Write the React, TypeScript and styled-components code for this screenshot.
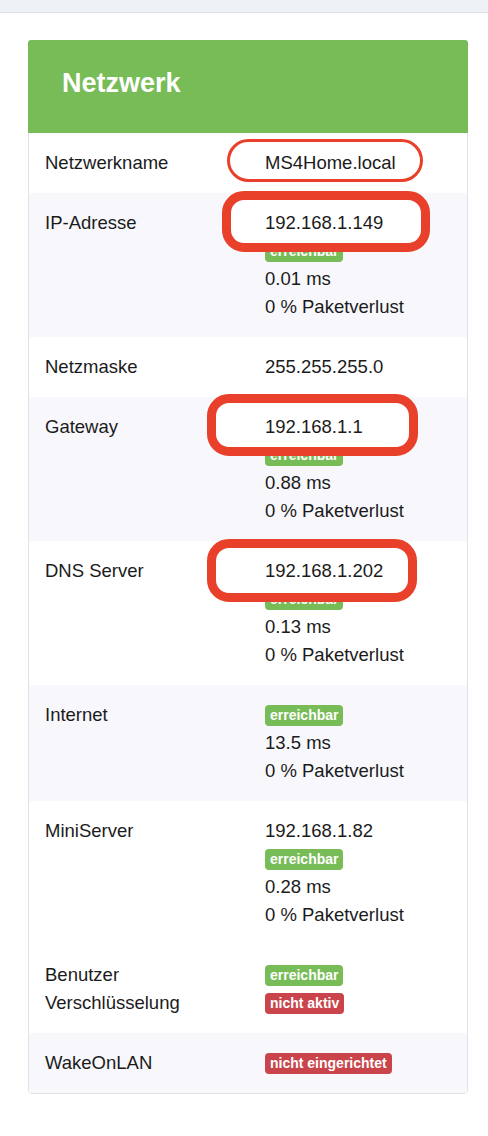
import * as React from "react";
import styled, { createGlobalStyle } from "styled-components";

const GlobalStyle = createGlobalStyle`
  html, body {
    margin: 0;
    padding: 0;
    background: #ffffff;
  }
  body {
    font-family: "Liberation Sans", Arial, sans-serif;
    color: #1b1b1b;
  }
`;

const TopBar = styled.div`
  height: 12px;
  background: #eef1f5;
  border-bottom: 1px solid #dde1e6;
`;

const Page = styled.div`
  padding: 27px 20px 40px 28px;
`;

const Card = styled.div`
  width: 440px;
  box-sizing: border-box;
  border: 1px solid #dfe3e8;
  border-radius: 4px;
  background: #ffffff;
`;

const CardHeader = styled.div`
  height: 93px;
  box-sizing: border-box;
  background: #77bc57;
  border-radius: 3px 3px 0 0;
  margin: -1px -1px 0 -1px;
  padding: 30px 0 0 34px;
`;

const Title = styled.h2`
  margin: 0;
  font-size: 27px;
  font-weight: bold;
  color: #ffffff;
  line-height: 1;
`;

const Row = styled.div<{ $shaded?: boolean }>`
  display: grid;
  grid-template-columns: 220px 1fr;
  padding: 16px 0 16px 16px;
  background: ${(p) => (p.$shaded ? "#f8f8fc" : "#ffffff")};
  font-size: 18.5px;
  line-height: 28px;
`;

const Label = styled.div`
  padding-right: 30px;
`;

const Values = styled.div`
  display: flex;
  flex-direction: column;
  align-items: flex-start;
`;

const Line = styled.div`
  height: 28px;
  display: flex;
  align-items: center;
  white-space: nowrap;
`;

const Badge = styled.span<{ $tone: "ok" | "bad" }>`
  display: inline-block;
  font-size: 14px;
  font-weight: bold;
  line-height: 21px;
  height: 21px;
  padding: 0 5px;
  border-radius: 4px;
  color: #ffffff;
  background: ${(p) => (p.$tone === "ok" ? "#77bc57" : "#c9444b")};
`;

const Marked = styled.span`
  position: relative;
  display: inline-block;
`;

const MarkText = styled.span`
  position: relative;
  z-index: 2;
`;

const MarkBox = styled.span<{
  $left: number;
  $top: number;
  $w: number;
  $h: number;
  $thick: number;
}>`
  position: absolute;
  z-index: 1;
  left: ${(p) => p.$left}px;
  top: ${(p) => p.$top}px;
  width: ${(p) => p.$w}px;
  height: ${(p) => p.$h}px;
  box-sizing: border-box;
  border: ${(p) => p.$thick}px solid #e8402a;
  border-radius: ${(p) => Math.min(p.$h / 2, 22)}px;
  background: #ffffff;
`;

interface Mark {
  left: number;
  top: number;
  w: number;
  h: number;
  thick: number;
}

function Highlighted({ text, mark }: { text: string; mark: Mark }) {
  return (
    <Marked>
      <MarkBox
        $left={mark.left}
        $top={mark.top}
        $w={mark.w}
        $h={mark.h}
        $thick={mark.thick}
      />
      <MarkText>{text}</MarkText>
    </Marked>
  );
}

type Tone = "ok" | "bad";

interface Entry {
  label: string;
  shaded?: boolean;
  value?: string;
  mark?: Mark;
  badges?: { text: string; tone: Tone }[];
  ping?: string;
}

const entries: Entry[] = [
  {
    label: "Netzwerkname",
    value: "MS4Home.local",
    mark: { left: -38, top: -10, w: 196, h: 43, thick: 3 }
  },
  {
    label: "IP-Adresse",
    shaded: true,
    value: "192.168.1.149",
    mark: { left: -43, top: -18, w: 208, h: 61, thick: 9 },
    badges: [{ text: "erreichbar", tone: "ok" }],
    ping: "0.01 ms"
  },
  { label: "Netzmaske", value: "255.255.255.0" },
  {
    label: "Gateway",
    shaded: true,
    value: "192.168.1.1",
    mark: { left: -58, top: -19, w: 211, h: 62, thick: 9 },
    badges: [{ text: "erreichbar", tone: "ok" }],
    ping: "0.88 ms"
  },
  {
    label: "DNS Server",
    value: "192.168.1.202",
    mark: { left: -58, top: -18, w: 210, h: 63, thick: 9 },
    badges: [{ text: "erreichbar", tone: "ok" }],
    ping: "0.13 ms"
  },
  {
    label: "Internet",
    shaded: true,
    badges: [{ text: "erreichbar", tone: "ok" }],
    ping: "13.5 ms"
  },
  {
    label: "MiniServer",
    value: "192.168.1.82",
    badges: [{ text: "erreichbar", tone: "ok" }],
    ping: "0.28 ms"
  },
  {
    label: "Benutzer Verschlüsselung",
    badges: [
      { text: "erreichbar", tone: "ok" },
      { text: "nicht aktiv", tone: "bad" }
    ]
  },
  {
    label: "WakeOnLAN",
    shaded: true,
    badges: [{ text: "nicht eingerichtet", tone: "bad" }]
  }
];

function EntryRow({ entry }: { entry: Entry }) {
  return (
    <Row $shaded={entry.shaded}>
      <Label>{entry.label}</Label>
      <Values>
        {entry.value && (
          <Line>
            {entry.mark ? (
              <Highlighted text={entry.value} mark={entry.mark} />
            ) : (
              entry.value
            )}
          </Line>
        )}
        {(entry.badges || []).map((b, i) => (
          <Line key={i}>
            <Badge $tone={b.tone}>{b.text}</Badge>
          </Line>
        ))}
        {entry.ping && (
          <>
            <Line>{entry.ping}</Line>
            <Line>0 % Paketverlust</Line>
          </>
        )}
      </Values>
    </Row>
  );
}

export default function App() {
  return (
    <>
      <GlobalStyle />
      <TopBar />
      <Page>
        <Card>
          <CardHeader>
            <Title>Netzwerk</Title>
          </CardHeader>
          {entries.map((e, i) => (
            <EntryRow key={i} entry={e} />
          ))}
        </Card>
      </Page>
    </>
  );
}
